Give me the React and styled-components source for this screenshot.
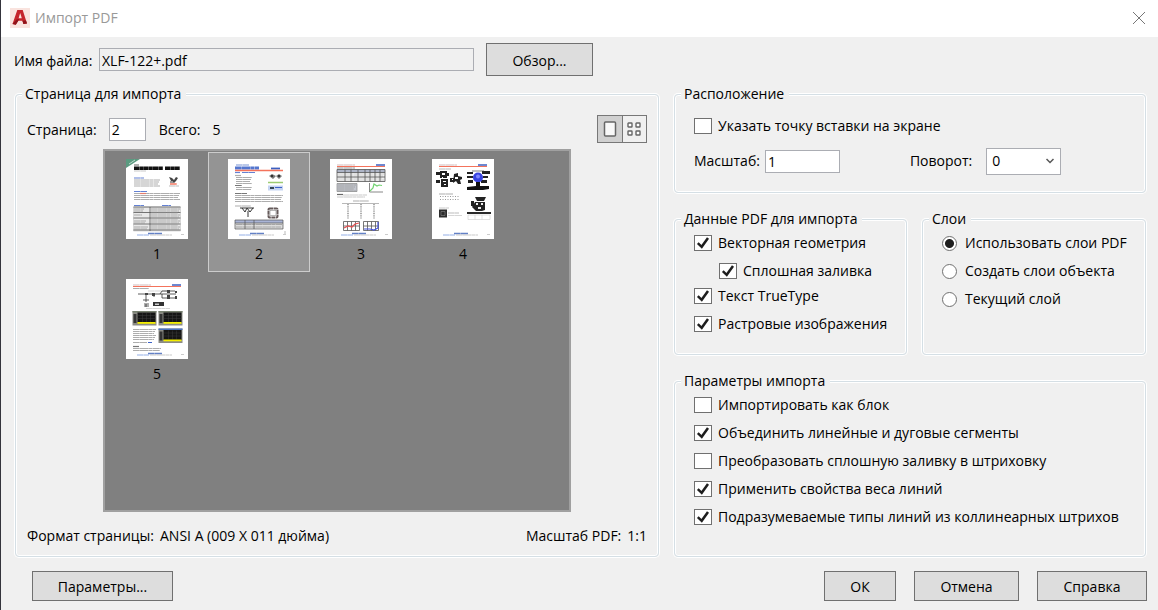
import React, { useState } from "react";
import styled, { createGlobalStyle } from "styled-components";

const pages = [1, 2, 3, 4, 5];

const importOptions = [
  { label: "Импортировать как блок", checked: false },
  { label: "Объединить линейные и дуговые сегменты", checked: true },
  { label: "Преобразовать сплошную заливку в штриховку", checked: false },
  { label: "Применить свойства веса линий", checked: true },
  { label: "Подразумеваемые типы линий из коллинеарных штрихов", checked: true },
];

const layerOptions = [
  "Использовать слои PDF",
  "Создать слои объекта",
  "Текущий слой",
];

// rows of tiny "text" on a thumbnail
const Lines = ({ x, y, w, n = 1, gap = 2, color = "#999", h = 1.2 }) => (
  <g stroke={color} strokeWidth={h} strokeDasharray="6 .3 9 .3 4 .4">
    {[...Array(n)].map((item, i) => (
      <path key={i} opacity=".8" d={`M${x} ${y + i * gap}h${w - (i % 3)}`} />
    ))}
  </g>
);

const PageFooter = () => (
  <g>
    <Lines x={22} y={74.5} w={14} color="#3c62b8" h={1.4} />
    <Lines x={11} y={76} w={12} color="#7b9be0" h={1} />
    <Lines x={24} y={76} w={22} color="#bbb" h={1} />
    <path stroke="#ccc" d="M55 75.5h3" />
  </g>
);

const PageHeader = () => (
  <g>
    <Lines x={7} y={6} w={18} color="#c9a9a9" />
    <path stroke="#3c5fc0" strokeWidth="1.5" d="M46 6h9" />
    <path stroke="#f4735c" d="M7 7.5h48" />
  </g>
);

const Screen = ({ x, y, top = "#77806f" }) => (
  <g>
    <path fill="#8b8b85" d={`M${x} ${y}h24v14.5h-24z`} />
    <path fill={top} d={`M${x} ${y}h24v1.5h-24z`} />
    <path fill="#151515" d={`M${x + 5} ${y + 1.5}h18v10h-18z`} />
    <path
      stroke="#444"
      strokeWidth=".4"
      d={`M${x + 5} ${y + 4.5}h18m-18 3h18M${x + 10} ${y + 2}v9m4-9v9m4-9v9`}
    />
    <path fill="#f4ee00" d={`M${x + 5} ${y + 11}h18v1.8h-18z`} />
    <path fill="#333" d={`M${x + 1} ${y + 3}h3v9h-3z`} />
  </g>
);

const drawings = {
  1: (
    <g>
      <path fill="#5b9a80" d="M0 0h14L0 9z" />
      <path stroke="#d6e8df" strokeWidth=".8" d="M3 5l6-4" />
      <Lines x={8} y={6} w={5} color="#555" />
      <path
        stroke="#111"
        strokeWidth="3.4"
        strokeDasharray="5 .3 4 .2"
        d="M8 9.2h29m2 0h15"
      />
      <Lines x={8} y={12} w={12} color="#bbb" />
      <Lines x={8} y={19} w={10} color="#3c62c8" />
      <Lines x={8} y={21} w={26} n={4} />
      <path fill="#444" d="M43 18l3 1 2 2 2-3 2 1-2 3-2 2-3-2z" />
      <path fill="#999" d="M44 22h3v2h-3z" />
      <Lines x={44} y={25} w={7} color="#f0563a" h={1.4} />
      <Lines x={43} y={27} w={10} color="#aaa" />
      <Lines x={8} y={32.5} w={13} color="#3c62c8" />
      <Lines x={8} y={34.5} w={46} n={4} />
      <Lines x={14} y={34.5} w={6} color="#f4735c" />
      <path fill="#e9e9e9" stroke="#bbb" strokeWidth=".5" d="M7.5 48h47v24h-47z" />
      <Lines x={8} y={46.5} w={10} color="#3c62c8" />
      <Lines x={36} y={46.5} w={9} color="#3c62c8" />
      <path stroke="#555" strokeWidth=".8" d="M7.5 48h47m-47 5.5h47m-47 5.5h47m-47 6h47m-47 6h47M24 48v24" />
      <Lines x={25} y={50} w={29} n={11} />
      <Lines x={8} y={50} w={10} n={2} />
      <Lines x={8} y={56} w={8} />
      <Lines x={8} y={62} w={12} n={2} />
      <Lines x={8} y={68} w={14} n={2} />
    </g>
  ),
  2: (
    <g>
      <Lines x={8} y={6} w={13} color="#5778cc" />
      <Lines x={7} y={9} w={24} color="#2a55c4" h={2.8} />
      <path stroke="#3c5fc0" strokeWidth="1.8" d="M43 9.5h9" />
      <path stroke="#f4735c" strokeWidth="1.4" d="M7 11.5h48" />
      <Lines x={7} y={13.5} w={5} color="#3c62c8" />
      <Lines x={14} y={13.5} w={13} color="#3c62c8" />
      <Lines x={7} y={16.5} w={6} />
      <Lines x={8} y={18.5} w={16} n={4} />
      <Lines x={7} y={26.5} w={7} color="#555" />
      <Lines x={8} y={28.5} w={16} n={2} />
      <path fill="#777" d="M41 17l3-2 4 2-3 3zM48 17l3-2 3 2-3 3z" />
      <path fill="#333" d="M43 16h2v2h-2zM50 16h2v2h-2z" />
      <path stroke="#9ccb73" strokeWidth="1.5" d="M40 23.5h15" />
      <path fill="#c5d4f2" d="M40 26.5h15v5H40z" />
      <path fill="#345" d="M42 28h4v2h-4z" />
      <path stroke="#3c62c8" d="M47 28.5h7" />
      <Lines x={7} y={34.5} w={12} color="#555" />
      <Lines x={7} y={36.5} w={48} n={4} />
      <Lines x={7} y={47} w={16} />
      <path fill="none" stroke="#333" d="M12 49h14M14 49l3 4 2-4 3 4 3-4M20 52v6" />
      <rect x="40.5" y="49.5" width="9" height="9" rx="1" fill="none" stroke="#655a5a" strokeWidth="2" strokeDasharray="4 .5" />
      <rect x="42" y="51.5" width="6" height="5" fill="#fff" stroke="#888" strokeWidth=".6" />
      <path fill="#ddd" d="M7 61h48v9H7z" />
      <path fill="#a9b4d6" d="M7 61h48v3H7z" />
      <Lines x={8} y={65.5} w={46} n={2} gap={2.5} />
      <path fill="none" stroke="#555" strokeWidth=".7" d="M7 61h48v9H7zm0 3h48M17 61v9m9-9v9" />
      <path fill="#ddd" d="M56 72h2v4h-2z" />
    </g>
  ),
  3: (
    <g>
      <PageHeader />
      <Lines x={7} y={9} w={18} color="#777" />
      <path fill="#efefef" d="M7 10.5h48v12H7z" />
      <path fill="#adb4c6" d="M7 10.5h48v3H7z" />
      <Lines x={8} y={15} w={46} n={4} color="#ccc" h={1} />
      <path
        fill="none"
        stroke="#555"
        strokeWidth=".8"
        d="M7 10.5h48v12H7zm0 3h48m-48 4.5h48M15 10.5v12m6-12v12m7-12v12m7-12v12m5-12v12m5-12v12m5-12v12"
      />
      <path fill="#c4c7cf" stroke="#777" strokeWidth=".6" d="M7 24.5h20v8H7z" />
      <Lines x={8} y={26} w={18} n={4} />
      <path fill="none" stroke="#555" strokeWidth=".7" d="M39.5 24v9H53" />
      <path fill="none" stroke="#71d271" strokeWidth="1.2" d="M40 32l3-3 1-4 3 2 2-1 3 .5" />
      <Lines x={7} y={35.5} w={6} color="#444" />
      <Lines x={13} y={36} w={24} color="#bbb" />
      <Lines x={7} y={38} w={28} color="#bbb" />
      <Lines x={23} y={42} w={16} />
      <path stroke="#999" strokeWidth=".7" d="M12 44.5h37" />
      <path stroke="#777" strokeWidth="1.2" strokeDasharray="1 .8" d="M18 45v15m13-15v15m13-15v15" />
      <g fill="none" stroke="#555" strokeWidth=".8">
        <path d="M13.5 62.5h16v9h-16zm0 4.5h16m-12-4.5v9m4-9v9m4-9v9" />
        <path d="M33.5 62.5h15v9h-15zm0 4.5h15m-11-4.5v9m4-9v9m4-9v9" />
      </g>
      <path fill="none" stroke="#e85050" strokeWidth="1.2" d="M14 69l4-2 4 1 3-3 4-1" />
      <path fill="none" stroke="#4250da" strokeWidth="1.2" d="M34 70h6l4 1 4-2v-6" />
    </g>
  ),
  4: (
    <g>
      <PageHeader />
      <Lines x={7} y={10} w={12} color="#aaa" />
      <path fill="#222" d="M4 13h4v3H4zM4 21h4v3H4zM8 12h7v7H8zM9 20h7v8H9zM15 14h2v3h-2z" />
      <path fill="#fff" d="M10 14h3v2h-3zM11 22h3v1h-3zM10 18h1v2h-1zM12 25h2v1h-2z" />
      <path fill="#222" d="M18 19h4v4h-4zM22 15l4-1v3l4 1v2l-2 1 1 4h-3l-2-3-3 2z" />
      <path fill="#fff" d="M23 18h3v2h-3zM20 20h1v1h-1z" />
      <path fill="#222" d="M35 13h6v2h-6zM50 12h8v3h-8zM35 17h6v2h-6zM51 17h5v2h-5zM36 21h5v3h-5zM49 21h6v3h-6z" />
      <path stroke="#444" strokeWidth=".7" d="M40 12h12M41 18h10" />
      <circle cx="46" cy="18.5" r="5" fill="#3944e0" />
      <circle cx="46" cy="17.5" r="2" fill="#7d85ff" />
      <path fill="#111" d="M44 23h4v4h9v3l-6 1H35v-3l9-1z" />
      <Lines x={7} y={35} w={14} />
      <path stroke="#999" strokeDasharray="1 1.5" d="M8 37.5h19m-19 3h19" />
      <path fill="#2c2c2c" d="M7 50.5h8v8H7z" />
      <path fill="none" stroke="#888" strokeWidth=".6" d="M9 52.5h4v4H9z" />
      <Lines x={16} y={54} w={11} color="#aaa" />
      <Lines x={16} y={56.5} w={14} color="#ccc" />
      <Lines x={7} y={49} w={10} color="#bbb" />
      <path fill="#222" d="M43 38h11l-2 4h-7zM39 42h3v5h-3zM43 43h10v8l-3 1h-6l-4-4z" />
      <path fill="#eee" d="M44 44h2v2h-2zm5 0h2v2h-2zm-3 4h3v2h-3z" />
      <path stroke="#111" strokeWidth="1.8" d="M35 54h24" />
      <path fill="none" stroke="#ccc" strokeWidth=".6" d="M36 56h22v4.500H36zm7 0v4.500m7-4.500v4.500" />
    </g>
  ),
  5: (
    <g>
      <PageHeader />
      <Lines x={7} y={9.5} w={16} />
      <Lines x={22} y={12} w={20} color="#ccc" />
      <g fill="none" stroke="#333" strokeWidth=".8">
        <path d="M12 15h8m2 0h5m2 0h5l2-3h13M34 15h16m-14 0v4h14M20 15v8m0 2v3M28 15v3" />
        <path d="M17 21h6m-5 4h5m-5 2h5" />
      </g>
      <path fill="#444" d="M19 14h3v2h-3zM26 14h3v3h-3zM41 11h3v3h-3zM41 16h3v4h-3zM49 12h2v2h-2zM49 17h2v3h-2z" />
      <path fill="#333" d="M27 23h11v4H27z" />
      <path fill="#ccc" d="M29 24.5h4V26h-4z" />
      <Lines x={20} y={29.5} w={24} color="#ccc" />
      <Screen x={6.5} y={32} />
      <Screen x={32.5} y={32} />
      <Screen x={32.5} y={49.5} top="#4b72bd" />
      <Lines x={7} y={50.5} w={23} n={6} />
      <Lines x={7} y={63.5} w={14} />
      <path stroke="#3c62c8" d="M22 63.5h4" />
      <Lines x={7} y={67.5} w={6} color="#555" />
      <Lines x={7} y={69.5} w={28} n={2} />
    </g>
  ),
};

const Logo = () => (
  <svg width="20" height="20" viewBox="0 0 20 20" aria-hidden="true">
    <path fill="#f9e3de" d="M0 0h20v20H0z" />
    <path fill="#c5242b" d="M7.3 2h5.400L17 15.500l-3.600.5-1-3.200H8.200l-2.400 4L2.500 16z" />
    <path fill="#8f1319" d="M2.500 16l3.300.8L8.200 13l1-2-2.700.5zM12.400 12.800l1 3.200 3.600-.5-1-3z" />
    <path fill="#f9e3de" d="M10.200 5l1.600 5.200H8.600z" />
  </svg>
);

const CheckBox = ({ label, checked, nested }) => (
  <OptionRow $nested={nested}>
    <Mark>
      <CheckInput type="checkbox" defaultChecked={checked} />
      <svg width="18" height="16" viewBox="0 0 18 16" aria-hidden="true">
        <path
          fill="none"
          stroke="#1e1e1e"
          strokeWidth="2.5"
          d="M3.800 8.200l3.900 3.600L14 3"
        />
      </svg>
    </Mark>
    {label}
  </OptionRow>
);

const App = () => {
  const [page, setPage] = useState(2);
  const [file, setFile] = useState("XLF-122+.pdf");
  const [scale, setScale] = useState("1");

  return (
    <>
      <GlobalStyle />
      <Dialog>
        <TitleBar>
          <Logo />
          <Title>Импорт PDF</Title>
          <CloseButton type="button" aria-label="Закрыть">
            <svg width="14" height="14" viewBox="0 0 14 14">
              <path stroke="#777" d="M1 1l12 12M13 1L1 13" />
            </svg>
          </CloseButton>
        </TitleBar>

        <FileRow>
          <label htmlFor="file">Имя файла:</label>
          <FileInput
            id="file"
            value={file}
            onChange={(e) => setFile(e.target.value)}
          />
          <Button type="button" $width={107} $tall>
            Обзор...
          </Button>
        </FileRow>

        <Content>
          <Group>
            <Legend>Страница для импорта</Legend>
            <PageRow>
              <label htmlFor="page">Страница:</label>
              <PageInput
                id="page"
                value={page}
                onChange={(e) => setPage(Number(e.target.value))}
              />
              <span>Всего:</span>
              <span>{pages.length}</span>
              <Toggle>
                <ToggleButton type="button" aria-label="Одна страница" $active>
                  <svg width="14" height="16" viewBox="0 0 14 16">
                    <rect x="1.5" y="1" width="11" height="14" rx="1" fill="#f8f8f8" stroke="#666" strokeWidth="1.5" />
                  </svg>
                </ToggleButton>
                <ToggleButton type="button" aria-label="Эскизы">
                  <svg width="14" height="14" viewBox="0 0 14 14">
                    <g fill="#fff" stroke="#666" strokeWidth="1.4">
                      <rect x="1" y="1" width="4" height="4" rx=".5" />
                      <rect x="9" y="1" width="4" height="4" rx=".5" />
                      <rect x="1" y="9" width="4" height="4" rx=".5" />
                      <rect x="9" y="9" width="4" height="4" rx=".5" />
                    </g>
                  </svg>
                </ToggleButton>
              </Toggle>
            </PageRow>
            <Preview>
              {pages.map((item) => (
                <PageItem
                  type="button"
                  key={item}
                  $selected={item === page}
                  onClick={() => setPage(item)}
                >
                  <svg width="62" height="80" viewBox="0 0 62 80" aria-hidden="true">
                    <path fill="#fff" d="M0 0h62v80H0z" />
                    <Sketch>
                      {drawings[item]}
                      <PageFooter />
                    </Sketch>
                  </svg>
                  <span>{item}</span>
                </PageItem>
              ))}
            </Preview>
            <InfoRow>
              <Info>
                <span>Формат страницы:</span>
                <span>ANSI A (009 X 011 дюйма)</span>
              </Info>
              <Info>
                <span>Масштаб PDF:</span>
                <span>1:1</span>
              </Info>
            </InfoRow>
          </Group>

          <Side>
            <Group>
              <Legend>Расположение</Legend>
              <Location>
                <CheckBox label="Указать точку вставки на экране" />
                <Placement>
                  <Field>
                    <label htmlFor="scale">Масштаб:</label>
                    <ScaleInput
                      id="scale"
                      value={scale}
                      onChange={(e) => setScale(e.target.value)}
                    />
                  </Field>
                  <Field $wide>
                    <label htmlFor="rotation">Поворот:</label>
                    <SelectBox>
                      <Select id="rotation" defaultValue="0">
                        <option>0</option>
                        <option>90</option>
                        <option>180</option>
                        <option>270</option>
                      </Select>
                      <svg width="8" height="6" viewBox="0 0 8 6" aria-hidden="true">
                        <path fill="none" stroke="#555" strokeWidth="1.5" d="M.5 1L4 4.500 7.500 1" />
                      </svg>
                    </SelectBox>
                  </Field>
                </Placement>
              </Location>
            </Group>

            <Pair>
              <Group>
                <Legend>Данные PDF для импорта</Legend>
                <Options>
                  <CheckBox label="Векторная геометрия" checked />
                  <CheckBox label="Сплошная заливка" checked nested />
                  <CheckBox label="Текст TrueType" checked />
                  <CheckBox label="Растровые изображения" checked />
                </Options>
              </Group>
              <Group>
                <Legend>Слои</Legend>
                <Options>
                  {layerOptions.map((item, index) => (
                    <RadioRow key={item}>
                      <RadioInput
                        type="radio"
                        name="layers"
                        defaultChecked={index === 0}
                      />
                      {item}
                    </RadioRow>
                  ))}
                </Options>
              </Group>
            </Pair>

            <Group $grow>
              <Legend>Параметры импорта</Legend>
              <Options>
                {importOptions.map((item) => (
                  <CheckBox key={item.label} {...item} />
                ))}
              </Options>
            </Group>
          </Side>
        </Content>

        <Footer>
          <Button type="button" $width={141}>
            Параметры...
          </Button>
          <Actions>
            <Button type="button" $width={72}>
              ОК
            </Button>
            <Button type="button" $width={105}>
              Отмена
            </Button>
            <Button type="button" $width={110}>
              Справка
            </Button>
          </Actions>
        </Footer>
      </Dialog>
    </>
  );
};

const GlobalStyle = createGlobalStyle`
  *, *::before, *::after {
    box-sizing: border-box;
  }
  body {
    margin: 0;
    background: #f0f0f0;
  }
  body, button, input, select {
    font-family: "Open Sans", "Noto Sans", sans-serif;
    font-size: 14px;
    line-height: 20px;
    color: #000;
  }
  svg {
    display: block;
    flex: none;
  }
`;

const Dialog = styled.main`
  display: flex;
  flex-direction: column;
  min-height: 100vh;
  border-left: 1px solid #34343c;
  background: #f0f0f0;
`;

const TitleBar = styled.header`
  display: flex;
  align-items: center;
  height: 37px;
  padding: 0 12px 2px 9px;
  background: #fff;
`;

const Title = styled.h1`
  flex: 1;
  margin: 0 0 0 5px;
  font-size: 14px;
  font-weight: 400;
  color: #999;
`;

const CloseButton = styled.button`
  padding: 0;
  border: 0;
  background: none;
`;

const FileRow = styled.div`
  display: flex;
  align-items: center;
  padding: 6px 12px 8px 13px;

  label {
    width: 85px;
    padding-top: 2px;
    white-space: nowrap;
  }
`;

const TextInput = styled.input`
  height: 23px;
  padding: 1px 2px 0;
  border: 1px solid #abadb3;
  border-radius: 0;
  background: #fff;
`;

const FileInput = styled(TextInput)`
  width: 375px;
  margin-right: 12px;
  background: #f0f0f0;
`;

const PageInput = styled(TextInput)`
  width: 37px;
  margin: 0 13px 0 12px;
`;

const ScaleInput = styled(TextInput)`
  width: 75px;
`;

const Button = styled.button`
  width: ${(props) => props.$width}px;
  height: ${(props) => (props.$tall ? 33 : 30)}px;
  padding: 2px 0 0;
  border: 1px solid #707070;
  background: #ddd;
`;

const Content = styled.div`
  display: grid;
  flex: 1;
  grid-template-columns: 644fr 472fr;
  gap: 15px;
  padding: 0 12px 0 14px;
`;

const Side = styled.div`
  display: flex;
  flex-direction: column;
  gap: 16px;
`;

const Pair = styled.div`
  display: grid;
  grid-template-columns: 233fr 224fr;
  gap: 15px;
`;

const Group = styled.fieldset`
  display: flex;
  flex: ${(props) => (props.$grow ? 1 : "none")};
  flex-direction: column;
  min-width: 0;
  margin: 0;
  padding: 0;
  border: 1px solid #d5dfe5;
  border-radius: 4px;
  box-shadow: 0 0 0 1px #fff, inset 0 0 0 1px #fff;
`;

const Legend = styled.legend`
  margin-left: 6px;
  padding: 0 5px 0 3px;
  background: #f0f0f0;
`;

const PageRow = styled.div`
  display: flex;
  align-items: center;
  margin: 11px 11px 6px;

  label, span {
    padding-top: 2px;
  }
  span + span {
    margin-left: 12px;
  }
`;

const Toggle = styled.div`
  display: flex;
  width: 50px;
  height: 28px;
  margin-left: auto;
  border: 1px solid #777;
`;

const ToggleButton = styled.button`
  display: flex;
  flex: 1;
  align-items: center;
  justify-content: center;
  padding: 0;
  border: 0;
  border-right: ${(props) => (props.$active ? "1px solid #777" : 0)};
  background: ${(props) => (props.$active ? "#d0d0d0" : "#f0f0f0")};
`;

const Preview = styled.div`
  display: grid;
  flex: 1;
  grid-template-columns: repeat(auto-fill, 102px);
  align-content: start;
  margin: 0 87px;
  padding: 1px;
  border: 2px solid #a0a0a0;
  background: #808080;
`;

const PageItem = styled.button`
  display: flex;
  flex-direction: column;
  align-items: center;
  gap: 5px;
  height: 120px;
  padding: 6px 0 0;
  border: 1px solid ${(props) => (props.$selected ? "#ccc" : "transparent")};
  background: ${(props) => (props.$selected ? "#949494" : "transparent")};
`;

// low resolution page previews
const Sketch = styled.g`
  filter: blur(0.4px);
`;

const InfoRow = styled.div`
  display: flex;
  justify-content: space-between;
  padding: 14px 11px 10px;
`;

const Info = styled.div`
  display: flex;
  gap: 6px;
`;

const Location = styled.div`
  padding: 8px 19px 17px;
`;

const Placement = styled.div`
  display: flex;
  align-items: center;
  gap: 70px;
  height: 28px;
  margin-top: 7px;
`;

const Field = styled.div`
  display: flex;
  align-items: center;
  gap: ${(props) => (props.$wide ? 14 : 5)}px;
`;

const SelectBox = styled.div`
  display: grid;
  align-items: center;

  > * {
    grid-area: 1 / 1;
  }
  svg {
    justify-self: end;
    margin-right: 7px;
    pointer-events: none;
  }
`;

const Select = styled.select`
  width: 75px;
  height: 27px;
  padding: 0 5px;
  border: 1px solid #abadb3;
  border-radius: 0;
  background: #fff;
  appearance: none;
`;

const Options = styled.div`
  padding: 0 0 16px 19px;
`;

const OptionRow = styled.label`
  display: flex;
  align-items: center;
  gap: 6px;
  height: ${(props) => (props.$nested ? 25 : 28)}px;
  padding: ${(props) => (props.$nested ? "3px 0 0 25px" : 0)};
  white-space: nowrap;
`;

const Mark = styled.span`
  display: grid;

  > * {
    grid-area: 1 / 1;
  }
  svg {
    visibility: hidden;
    pointer-events: none;
  }
  input:checked + svg {
    visibility: visible;
  }
`;

const CheckInput = styled.input`
  width: 18px;
  height: 16px;
  margin: 0;
  border: 1px solid #707070;
  background: #fff;
  appearance: none;
`;

const RadioRow = styled(OptionRow)`
  gap: 8px;
`;

const RadioInput = styled.input`
  width: 15px;
  height: 15px;
  margin: 0;
  border: 1px solid #707070;
  border-radius: 50%;
  background: #fff;
  appearance: none;

  &:checked {
    background: radial-gradient(circle, #1e1e1e 4px, #fff 5px);
  }
`;

const Footer = styled.footer`
  display: flex;
  justify-content: space-between;
  padding: 14px 11px 9px 31px;
`;

const Actions = styled.div`
  display: flex;
  gap: 18px;
`;

export default App;
